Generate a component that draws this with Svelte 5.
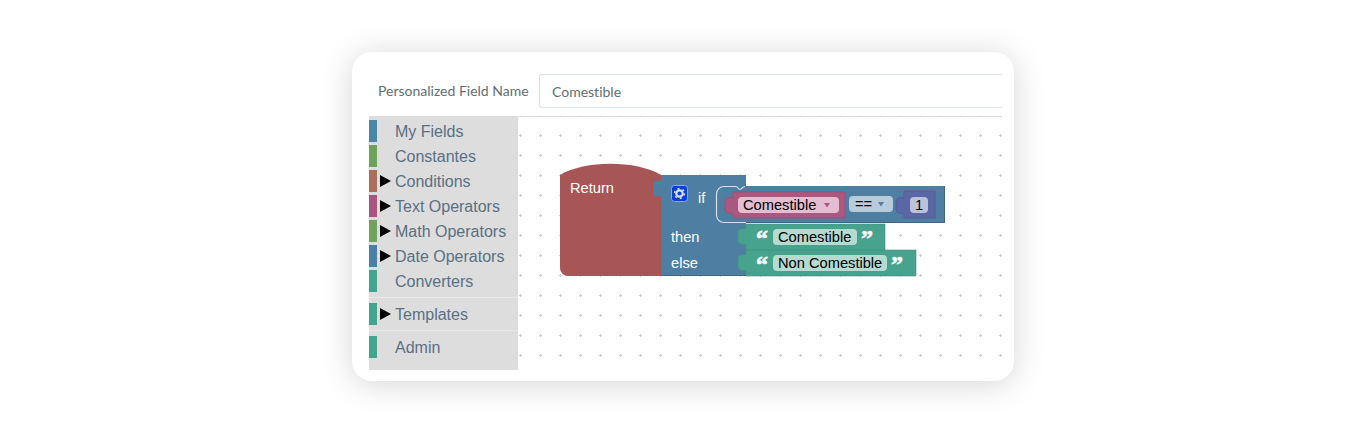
<script>
  const categories = [
    { name: "My Fields", color: "#4a86a5" },
    { name: "Constantes", color: "#6ea35a" },
    { name: "Conditions", color: "#a8705a", open: true },
    { name: "Text Operators", color: "#a9557f", open: true },
    { name: "Math Operators", color: "#72a35c", open: true },
    { name: "Date Operators", color: "#4a80a5", open: true },
    { name: "Converters", color: "#43a58f" },
    { name: "Templates", color: "#43a58f", open: true, sep: true },
    { name: "Admin", color: "#43a58f", sep: true },
  ];

  const textBlocks = [
    { label: "Comestible", y: 224, right: 885, pill: 84 },
    { label: "Non Comestible", y: 250, right: 916, pill: 114 },
  ];

  // puzzle tab on a block's left edge, drawn going upwards
  const tab = "c-2,.5 -3,.5 -5,0 c-2,-.5 -3,-2 -3,-4 v-7 c0,-2 1,-3.5 3,-4 c2,-.5 3,-.5 5,0";
</script>

<main class="page">
  <section class="card">
    <div class="field">
      <label for="field-name">Personalized Field Name</label>
      <input id="field-name" type="text" value="Comestible" />
    </div>
    <div class="editor">
      <ul class="toolbox">
        {#each categories as cat}
          {#if cat.sep}<li class="sep"></li>{/if}
          <li class="row">
            <span class="bar" style="background: {cat.color}"></span>
            <span class="arrow">
              {#if cat.open}<i></i>{/if}
            </span>
            <span class="name">{cat.name}</span>
          </li>
        {/each}
      </ul>
      <div class="workspace">
        <svg width="484" height="254" viewBox="518 116 484 254">
          <defs>
            <pattern id="grid" x="510" y="105" width="20" height="20" patternUnits="userSpaceOnUse">
              <rect x="9" y="10" width="3" height="1" fill="#ccc" />
              <rect x="10" y="9" width="1" height="3" fill="#ccc" />
            </pattern>
          </defs>
          <rect x="518" y="116" width="484" height="1" fill="#ddd" />
          <rect x="518" y="116" width="484" height="254" fill="url(#grid)" />

          <!-- return block -->
          <path class="ret" d="M560,175 c25,-15 76,-15 101,0 V276 H568 a8,8 0 0 1 -8,-8 Z" />
          <text class="lbl" x="570" y="193">Return</text>

          <!-- if block -->
          <path class="blue" d="M661,175 H746 V276 H661 V196 {tab} Z" />
          <path class="edge" d="M661,275.5 H746" />
          <rect x="671.5" y="185.5" width="16" height="16" rx="3" fill="#0b3fdc" stroke="#8ea6e2" />
          <circle cx="679.5" cy="193.5" r="3.2" fill="none" stroke="#d5def6" stroke-width="2.2" />
          <circle cx="679.5" cy="193.5" r="4.9" fill="none" stroke="#d5def6" stroke-width="1.6" stroke-dasharray="2 3.13" />
          <text class="lbl" x="698" y="203">if</text>
          <text class="lbl" x="671" y="242">then</text>
          <text class="lbl" x="671" y="268">else</text>

          <!-- compare block -->
          <path class="blue" d="M724,186 H945 V223 H724 a8,8 0 0 1 -8,-8 V194 a8,8 0 0 1 8,-8 Z" />
          <path class="edge" d="M746,222.5 H944.5 V186" />
          <path class="glow" d="M745,186.5 c-3,0 -3,3 -5,3 c-2,0 -2,-3 -4,-3 H724 a7.5,7.5 0 0 0 -7.5,7.5 V215 a7.5,7.5 0 0 0 7.5,7.5 H746" />

          <path class="pink" d="M733,192 H845 V218 H733 V213 {tab} Z" />
          <rect x="738" y="197" width="101" height="16" rx="4" fill="#e4bdd0" />
          <text class="val" x="743" y="210">Comestible</text>
          <path d="M824,203 h6 l-3,4.5 Z" fill="#ab5880" />

          <rect x="849" y="196" width="44" height="16" rx="4" fill="#b8cbdb" />
          <text class="val" x="855" y="209">==</text>
          <path d="M878,202 h6 l-3,4.5 Z" fill="#4f7ea3" />

          <path class="num" d="M904,191 H935 V218 H904 V213 {tab} Z" />
          <rect x="910" y="197" width="18" height="16" rx="4" fill="#bdc2db" />
          <text class="val" x="915" y="210">1</text>

          <!-- text blocks -->
          {#each textBlocks as b}
            <path class="green" d="M746,{b.y} H{b.right} V{b.y + 26} H746 V{b.y + 20} {tab} Z" />
            <rect x="773" y={b.y + 5} width={b.pill} height="16" rx="4" fill="#b5dacf" />
            <text class="quote" x="756" y={b.y + 22}>“</text>
            <text class="val" x="778" y={b.y + 18}>{b.label}</text>
            <text class="quote" x={773 + b.pill + 4} y={b.y + 22}>”</text>
          {/each}
        </svg>
      </div>
    </div>
  </section>
</main>

<style>
  .page {
    padding: 52px 0;
    display: flex;
    justify-content: center;
  }

  .card {
    width: 662px;
    box-sizing: border-box;
    padding: 22px 12px 11px 17px;
    background: #fff;
    border-radius: 20px;
    box-shadow: 0 3px 32px rgba(0, 0, 0, 0.17);
  }

  .field {
    display: flex;
    align-items: center;
    height: 34px;
    margin-bottom: 8px;
    padding-left: 9px;
  }

  .field label {
    width: 161px;
    flex: none;
    margin-top: -2px;
    font: 14px Lato, sans-serif;
    font-variant-ligatures: none;
    color: #5f6f75;
  }

  .field input {
    flex: 1;
    min-width: 0;
    height: 34px;
    box-sizing: border-box;
    padding: 0 0 0 12px;
    border: 1px solid #dde5e3;
    border-right: none;
    border-radius: 3px 0 0 3px;
    outline: none;
    font: 14px Lato, sans-serif;
    font-variant-ligatures: none;
    color: #5f6f75;
  }

  .editor {
    display: flex;
    height: 254px;
  }

  .toolbox {
    width: 149px;
    flex: none;
    margin: 0;
    padding: 4px 0 0;
    list-style: none;
    background: #ddd;
  }

  .row {
    display: flex;
    align-items: center;
    height: 22px;
    margin-bottom: 3px;
    font: 16px "Liberation Sans", Arial, sans-serif;
    color: #5a7084;
  }

  .sep {
    height: 1px;
    margin: 5px 0;
    background: #e8e8e8;
  }

  .bar {
    width: 8px;
    height: 22px;
    flex: none;
  }

  .arrow {
    width: 18px;
    flex: none;
    display: flex;
    padding-left: 3px;
    box-sizing: border-box;
  }

  .arrow i {
    border-left: 11px solid #000;
    border-top: 6.5px solid transparent;
    border-bottom: 6.5px solid transparent;
  }

  .name {
    padding-top: 2px;
  }

  .workspace {
    flex: 1;
    overflow: hidden;
  }

  svg {
    display: block;
  }

  .ret { fill: #a85555; }
  .blue { fill: #4f7ea3; }
  .pink { fill: #ab5880; stroke: #9c5075; stroke-width: 1; }
  .num { fill: #5b67a5; stroke: #525d95; stroke-width: 1; }
  .green { fill: #47a28e; stroke: #3f9481; stroke-width: 0.6; }
  .edge { fill: none; stroke: #3f6583; stroke-width: 1; }
  .glow { fill: none; stroke: #d3e0ea; stroke-width: 1.2; }

  text {
    font-family: "Liberation Sans", Arial, sans-serif;
    font-size: 14.67px;
  }

  .lbl { fill: #fff; }
  .val { fill: #000; }

  .quote {
    fill: #f4faf8;
    stroke: #f4faf8;
    stroke-width: 0.7;
    font-family: "Liberation Serif", serif;
    font-weight: bold;
    font-size: 24px;
  }
</style>
